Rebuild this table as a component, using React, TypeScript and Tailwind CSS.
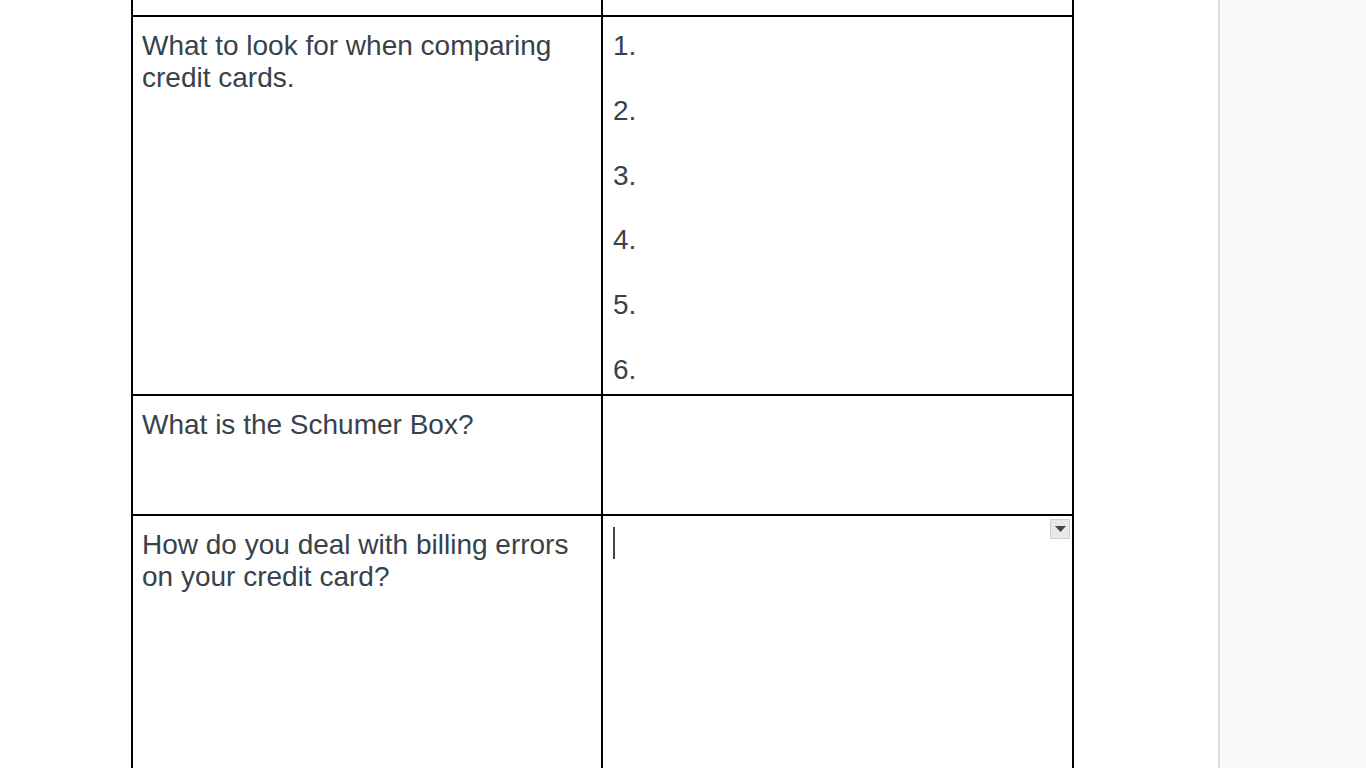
import React from 'react';

const rows = [
    { q: 'What to look for when comparing credit cards.', h: 'h-[379px]', list: true },
    { q: 'What is the Schumer Box?', h: 'h-[120px]', list: false },
    { q: 'How do you deal with billing errors on your credit card?', h: 'h-[300px]', list: false, active: true },
];

export default function App() {
    return (
        <div className="flex h-[768px] w-[1366px] overflow-hidden bg-white font-['Liberation_Sans',Arial,sans-serif] text-[28px] leading-[32.2px] text-[#38424b]">
            {/* document page */}
            <div className="w-[1218px] shrink-0">
                <div className="ml-[131px] w-[943px] border-l-2 border-black">
                    {/* previous row, cut off at the top */}
                    <div className="flex h-[17px]">
                        <div className="w-[470px] border-r-2 border-b-2 border-black" />
                        <div className="w-[471px] border-r-2 border-b-2 border-black" />
                    </div>

                    {rows.map((row, i) => (
                        <div key={i} className={`flex ${row.h}`}>
                            <div className="w-[470px] border-r-2 border-b-2 border-black pl-[9px] pr-4 pt-[13px]">
                                {row.q}
                            </div>
                            <div className="relative w-[471px] border-r-2 border-b-2 border-black pl-[10px] pt-[13px]">
                                {row.list && (
                                    <div className="flex flex-col gap-[32.6px]">
                                        {[1, 2, 3, 4, 5, 6].map((n) => (
                                            <div key={n}>{n}.</div>
                                        ))}
                                    </div>
                                )}
                                {row.active && (
                                    <>
                                        <div className="mt-[-2px] h-[32px] w-[2px] bg-[#3c4650]" />
                                        <div className="absolute right-[2px] top-[3px] flex h-[20px] w-[20px] items-center justify-center border border-[#d0d0d0] bg-[#e8e8e8]">
                                            <svg width="11" height="6" viewBox="0 0 11 6">
                                                <path d="M0 0h11L5.5 6z" fill="#444" />
                                            </svg>
                                        </div>
                                    </>
                                )}
                            </div>
                        </div>
                    ))}
                </div>
            </div>

            {/* side panel */}
            <div className="flex-1 border-l-2 border-[#dadce0] bg-[#f8f9fa]" />
        </div>
    );
}
